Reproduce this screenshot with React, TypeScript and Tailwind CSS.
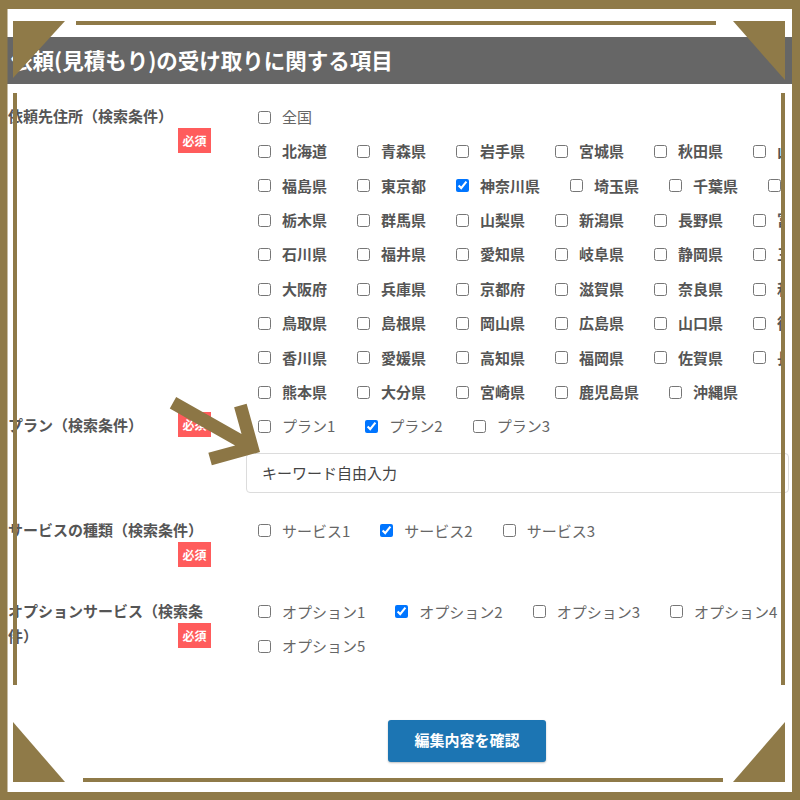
import React from 'react';

const PREFS: string[][] = [
  ['北海道', '青森県', '岩手県', '宮城県', '秋田県', '山形県'],
  ['福島県', '東京都', '神奈川県', '埼玉県', '千葉県', '茨城県'],
  ['栃木県', '群馬県', '山梨県', '新潟県', '長野県', '富山県'],
  ['石川県', '福井県', '愛知県', '岐阜県', '静岡県', '三重県'],
  ['大阪府', '兵庫県', '京都府', '滋賀県', '奈良県', '和歌山県'],
  ['鳥取県', '島根県', '岡山県', '広島県', '山口県', '徳島県'],
  ['香川県', '愛媛県', '高知県', '福岡県', '佐賀県', '長崎県'],
  ['熊本県', '大分県', '宮崎県', '鹿児島県', '沖縄県'],
];

const CHECKED = ['神奈川県', 'プラン2', 'サービス2', 'オプション2'];

function Check({ label, bold }: { label: string; bold?: boolean }) {
  return (
    <label className="flex items-center shrink-0 mr-[30px]">
      <input
        type="checkbox"
        checked={CHECKED.includes(label)}
        readOnly
        className="m-0 w-[13px] h-[13px] shrink-0"
      />
      <span className={`ml-[11px] whitespace-nowrap ${bold ? 'font-semibold text-[#555555]' : 'text-[#666666]'}`}>
        {label}
      </span>
    </label>
  );
}

function CheckRow({ items, bold }: { items: string[]; bold?: boolean }) {
  return (
    <div className="flex items-center h-[34.375px] pl-[12px] w-[539px] overflow-hidden">
      {items.map((item) => (
        <Check key={item} label={item} bold={bold} />
      ))}
    </div>
  );
}

function Label({ text, badgeTop }: { text: string; badgeTop?: boolean }) {
  return (
    <div className="relative w-[203px] shrink-0 ml-[8px] mt-[3px] min-h-[51px] text-[15px] leading-[25px] font-semibold text-[#555555]">
      <span>{text}</span>
      <span
        className={`absolute right-0 ${badgeTop ? 'top-0' : 'top-[25px]'} w-[33px] h-[25px] bg-[#ff5c5c] text-white text-[12px] font-bold leading-[25px] text-center`}
      >
        必須
      </span>
    </div>
  );
}

function Frame() {
  const gold = '#8f7a48';
  return (
    <svg className="absolute inset-0 pointer-events-none" width="800" height="800" viewBox="0 0 800 800">
      {/* outer band */}
      <rect x="0" y="0" width="800" height="9" fill={gold} />
      <rect x="0" y="792" width="800" height="8" fill={gold} />
      <rect x="0" y="0" width="7.5" height="800" fill={gold} />
      <rect x="792" y="0" width="8" height="800" fill={gold} />
      {/* inner lines */}
      <rect x="76" y="21" width="640" height="4" fill={gold} />
      <rect x="83" y="778" width="640" height="4" fill={gold} />
      <rect x="13" y="93" width="4" height="592" fill={gold} />
      <rect x="781" y="93" width="4" height="592" fill={gold} />
      {/* corner triangles */}
      <polygon points="13,21 65,21 13,78" fill={gold} />
      <polygon points="733,21 785,21 785,80" fill={gold} />
      <polygon points="13,722 13,782 65,782" fill={gold} />
      <polygon points="733,782 785,782 785,722" fill={gold} />
    </svg>
  );
}

function Arrow() {
  return (
    <svg className="absolute inset-0 pointer-events-none" width="800" height="800" viewBox="0 0 800 800">
      <g transform="translate(260 452) rotate(-15.5)">
        <polygon
          points="0,0 -50,0 -50,-13 -22.2,-13 -75.3,-66.1 -66.1,-75.3 -13,-22.2 -13,-50 0,-50"
          fill="#8c7645"
        />
      </g>
    </svg>
  );
}

export default function App() {
  return (
    <div className="relative w-[800px] h-[800px] overflow-hidden bg-white font-['Noto_Sans_CJK_JP','Noto_Sans',sans-serif] text-[15px]">
      <div className="pt-[37px]">
        {/* Header */}
        <div className="h-[47px] bg-[#666666] flex items-center pl-[11px] text-white text-[21.5px] font-bold whitespace-nowrap">
          依頼(見積もり)の受け取りに関する項目
        </div>

        {/* 依頼先住所 */}
        <div className="flex mt-[16px]">
          <Label text="依頼先住所（検索条件）" />
          <div className="ml-[35px]">
            <CheckRow items={['全国']} />
            {PREFS.map((row, i) => (
              <CheckRow key={i} items={row} bold />
            ))}
          </div>
        </div>

        {/* プラン */}
        <div className="flex">
          <Label text="プラン（検索条件）" badgeTop />
          <div className="ml-[35px]">
            <CheckRow items={['プラン1', 'プラン2', 'プラン3']} />
            <input
              readOnly
              defaultValue="キーワード自由入力"
              className="mt-[9px] w-[543px] h-[40px] border border-[#dcdcdc] rounded-[4px] px-[15px] text-[15px] text-[#444444] outline-none"
            />
          </div>
        </div>

        {/* サービス */}
        <div className="flex mt-[21px]">
          <Label text="サービスの種類（検索条件）" />
          <div className="ml-[35px]">
            <CheckRow items={['サービス1', 'サービス2', 'サービス3']} />
          </div>
        </div>

        {/* オプション */}
        <div className="flex mt-[27px]">
          <Label text="オプションサービス（検索条件）" />
          <div className="ml-[35px]">
            <CheckRow items={['オプション1', 'オプション2', 'オプション3', 'オプション4']} />
            <CheckRow items={['オプション5']} />
          </div>
        </div>

        <div className="mt-[56px]">
          <button className="ml-[388px] w-[158px] h-[42px] bg-[#1c75b3] rounded-[3px] text-white text-[15px] font-bold shadow-[0_1px_2px_rgba(0,0,0,0.25)]">
            編集内容を確認
          </button>
        </div>
      </div>

      <Frame />
      <Arrow />
    </div>
  );
}
